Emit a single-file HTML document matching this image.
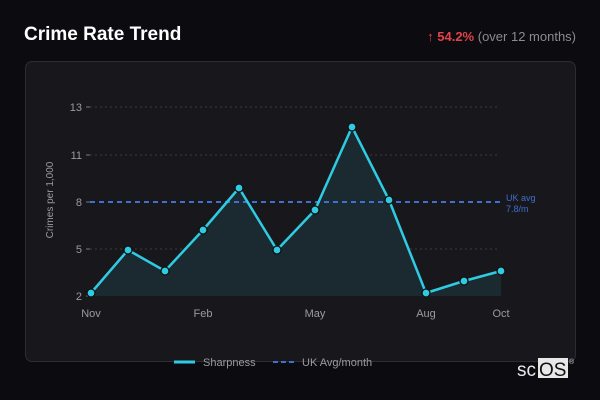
<!DOCTYPE html>
<html><head><meta charset="utf-8"><style>
body{margin:0;width:600px;height:400px;background:#0c0b10;font-family:"Liberation Sans",sans-serif;overflow:hidden;position:relative}
.t{position:absolute;left:24px;top:24px;color:#fff;font-weight:bold;font-size:19px}
.r{position:absolute;right:24px;top:29px;font-size:13px;color:#8a8a90}
.r b{color:#e0434a}
.p{position:absolute;left:25px;top:61px;width:549px;height:299px;background:#18181c;border:1px solid #2c2c32;border-radius:7px}
svg{position:absolute;left:0;top:0}
</style></head><body>
<div class="t">Crime Rate Trend</div>
<div class="r"><span style="color:#e0434a">↑</span> <b>54.2%</b> (over 12 months)</div>
<div class="p"></div>
<svg width="600" height="400" font-family="Liberation Sans, sans-serif">
<g stroke="#3a3a40" stroke-dasharray="2,3" stroke-width="1">
<line x1="90" y1="107" x2="500" y2="107"/><line x1="90" y1="155" x2="500" y2="155"/><line x1="90" y1="249" x2="500" y2="249"/>
</g>
<g stroke="#777" stroke-width="1"><line x1="86" y1="107" x2="90" y2="107"/><line x1="86" y1="155" x2="90" y2="155"/><line x1="86" y1="202" x2="90" y2="202"/><line x1="86" y1="249" x2="90" y2="249"/><line x1="86" y1="296" x2="90" y2="296"/></g>
<g fill="#9a9aa0" font-size="11" text-anchor="end">
<text x="82" y="111">13</text><text x="82" y="159">11</text><text x="82" y="206">8</text><text x="82" y="253">5</text><text x="82" y="300">2</text></g>
<text transform="translate(53,200) rotate(-90)" fill="#9a9aa0" font-size="10" text-anchor="middle">Crimes per 1,000</text>
<g fill="#9a9aa0" font-size="11" text-anchor="middle">
<text x="91" y="317">Nov</text><text x="203" y="317">Feb</text><text x="315" y="317">May</text><text x="426" y="317">Aug</text><text x="501" y="317">Oct</text></g>
<polygon fill="#1a2a30" points="91,296 91,293 128,250 165,271 203,230 239,188 277,250 315,210 352,127 389,200 426,293 464,281 501,271 501,296"/>
<line x1="90" y1="202" x2="500" y2="202" stroke="#3f6fd0" stroke-width="2" stroke-dasharray="5,4"/>
<text x="506" y="201" fill="#3f6fd0" font-size="9">UK avg</text><text x="506" y="212" fill="#3f6fd0" font-size="9">7.8/m</text>
<polyline fill="none" stroke="#2fcbe2" stroke-width="2.5" stroke-linejoin="round" points="91,293 128,250 165,271 203,230 239,188 277,250 315,210 352,127 389,200 426,293 464,281 501,271"/>
<g fill="#2fcbe2" stroke="#111" stroke-width="1.3">
<circle cx="91" cy="293" r="4"/><circle cx="128" cy="250" r="4"/><circle cx="165" cy="271" r="4"/><circle cx="203" cy="230" r="4"/><circle cx="239" cy="188" r="4"/><circle cx="277" cy="250" r="4"/><circle cx="315" cy="210" r="4"/><circle cx="352" cy="127" r="4"/><circle cx="389" cy="200" r="4"/><circle cx="426" cy="293" r="4"/><circle cx="464" cy="281" r="4"/><circle cx="501" cy="271" r="4"/></g>
<line x1="174" y1="362" x2="195" y2="362" stroke="#2fcbe2" stroke-width="3"/>
<text x="203" y="366" fill="#9a9aa0" font-size="11">Sharpness</text>
<line x1="273" y1="362" x2="295" y2="362" stroke="#3f6fd0" stroke-width="2" stroke-dasharray="5,3"/>
<text x="302" y="366" fill="#9a9aa0" font-size="11">UK Avg/month</text>
<rect x="538" y="358" width="30" height="20" fill="#e8e8e8"/>
<text x="517" y="376" fill="#e8e8e8" font-size="19">sc</text>
<text x="539" y="376" fill="#111" font-size="19">OS</text>
<text x="569" y="364" fill="#ccc" font-size="7">®</text>
</svg>
</body></html>
